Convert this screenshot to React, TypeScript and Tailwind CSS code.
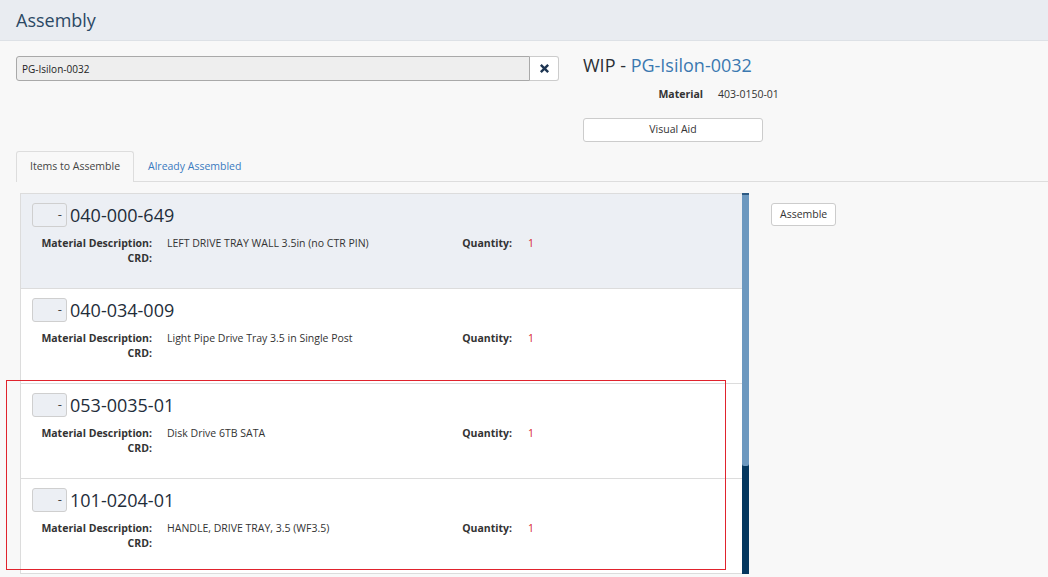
const font = { fontFamily: '"Open Sans", "Liberation Sans", sans-serif' };

interface Item {
  part: string;
  description: string;
  quantity: number;
  active?: boolean;
}

const items: Item[] = [
  { part: '040-000-649', description: 'LEFT DRIVE TRAY WALL 3.5in (no CTR PIN)', quantity: 1, active: true },
  { part: '040-034-009', description: 'Light Pipe Drive Tray 3.5 in Single Post', quantity: 1 },
  { part: '053-0035-01', description: 'Disk Drive 6TB SATA', quantity: 1 },
  { part: '101-0204-01', description: 'HANDLE, DRIVE TRAY, 3.5 (WF3.5)', quantity: 1 },
];

function ItemRow({ item, first }: { item: Item; first: boolean }) {
  return (
    <div
      className={`border-b border-[#dcdcdc] pl-[11px] pr-3 pt-[9px] ${first ? 'h-[96px] border-t' : 'h-[95px]'} ${
        item.active ? 'bg-[#eceff4]' : 'bg-white'
      }`}
    >
      <div className="flex items-center h-[24px]">
        {/* quantity stepper */}
        <div className="w-[35px] h-[24px] rounded-[3px] border border-[#cfcfcf] bg-[#eceff4] flex items-center justify-end pr-[4px] text-[13px] text-[#444]">
          -
        </div>
        <span className="ml-[3px] text-[18px] text-[#1f2d3a] leading-[24px]">{item.part}</span>
      </div>
      <div className="flex mt-[9px] text-[10.5px] leading-[15px] text-[#333]">
        <div className="w-[120px] text-right font-bold">
          <div>Material Description:</div>
          <div>CRD:</div>
        </div>
        <div className="ml-[15px] w-[280px]">{item.description}</div>
        <div className="w-[65px] text-right font-bold">Quantity:</div>
        <div className="ml-[16px] text-[#d8242b]">{item.quantity}</div>
      </div>
    </div>
  );
}

export default function App() {
  return (
    <div className="h-screen w-full overflow-hidden bg-[#f8f8f8] text-[#333] relative" style={font}>
      {/* Page header */}
      <header className="h-[41px] bg-[#e9ecf1] border-b border-[#dde1e6] px-4 flex items-center">
        <h1 className="text-[18px] text-[#2b4864]">Assembly</h1>
      </header>

      {/* Search + WIP info */}
      <div className="flex px-4 pt-[15px]">
        <div className="flex w-[543px] h-[25px]">
          <input
            readOnly
            value="PG-Isilon-0032"
            className="flex-1 h-full rounded-l-[3px] border border-[#a9a9a9] bg-[#eeeeee] px-[5px] text-[10px] text-[#222] outline-none"
            style={font}
          />
          <button className="w-[29px] h-full border border-l-0 border-[#cccccc] rounded-r-[3px] bg-white flex items-center justify-center">
            <svg width="11" height="11" viewBox="0 0 12 12">
              <path d="M2 2 L10 10 M10 2 L2 10" stroke="#1d3552" strokeWidth="2.6" strokeLinecap="butt" />
            </svg>
          </button>
        </div>

        <div className="ml-[24px] w-[240px]">
          <div className="text-[18px] leading-[22px] -mt-[2px]">
            <span className="text-[#2a2f36]">WIP - </span>
            <span className="text-[#3b78b0]">PG-Isilon-0032</span>
          </div>
          <div className="flex mt-[11px] text-[10.5px] leading-[15px]">
            <div className="w-[120px] text-right font-bold">Material</div>
            <div className="ml-[15px]">403-0150-01</div>
          </div>
          <button
            className="mt-[16px] w-[180px] h-[24px] rounded-[3px] border border-[#cccccc] bg-white text-[10.5px] text-[#333]"
            style={font}
          >
            Visual Aid
          </button>
        </div>
      </div>

      {/* Tabs */}
      <div className="ml-4 mt-[9px] flex items-end border-b border-[#dddddd] h-[31px]">
        <div className="h-[31px] -mb-px px-[13px] flex items-center rounded-t-[3px] border border-b-0 border-[#dddddd] bg-[#f8f8f8] text-[10.5px] text-[#444]">
          Items to Assemble
        </div>
        <div className="h-[31px] pt-[3px] px-[14px] flex items-center text-[10.5px] text-[#3a7abf]">Already Assembled</div>
      </div>

      {/* List + actions */}
      <div className="flex mt-[11px] pl-[20px]">
        <div className="flex">
          <div className="w-[722px] border-l border-[#dcdcdc]">
            {items.map((item, i) => (
              <ItemRow key={item.part} item={item} first={i === 0} />
            ))}
          </div>
          {/* scrollbar */}
          <div className="w-[7px] flex flex-col bg-[#04375f]">
            <div className="h-[273px] bg-[#6c98bf] border-t-2 border-[#2d5a83] rounded-b-[2px]" />
          </div>
        </div>
        <div className="ml-[22px] pt-[7px]">
          <button
            className="h-[23px] px-[8px] rounded-[3px] border border-[#cccccc] bg-white text-[10.5px] text-[#333]"
            style={font}
          >
            Assemble
          </button>
        </div>
      </div>

      {/* annotation outline */}
      <div className="absolute left-[6px] top-[380px] w-[720px] h-[190px] border border-[#e0232d] pointer-events-none" />
    </div>
  );
}
